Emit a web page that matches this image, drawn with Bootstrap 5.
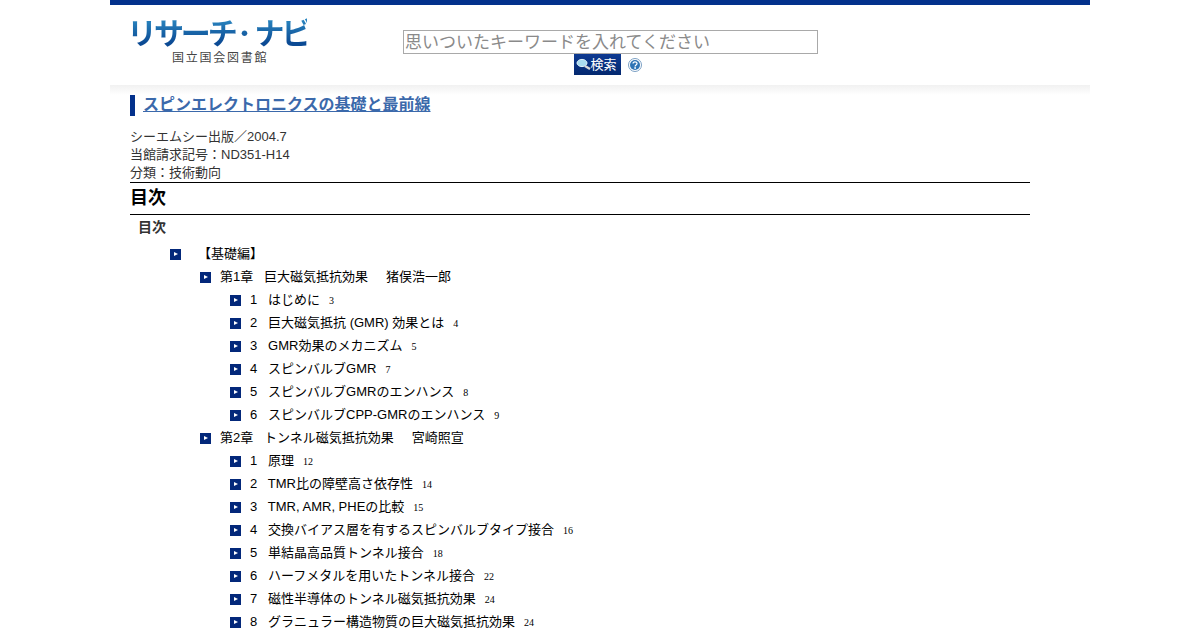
<!DOCTYPE html>
<html lang="ja"><head><meta charset="utf-8"><title>リサーチ・ナビ</title>
<link rel="stylesheet" href="https://cdn.jsdelivr.net/npm/bootstrap@5.3.0/dist/css/bootstrap.min.css">
<style>
html,body{height:630px;overflow:hidden}
body{background:#fff;color:#000;font-family:"Liberation Sans","Noto Sans CJK JP",sans-serif;font-size:13px;line-height:18px}
.shell{width:980px;margin:0 auto;border-top:5px solid #03318c}
.head{height:80px}
.logo-box{width:273px;padding:9px 0 0 17px}
.logo-main{font-size:30px;line-height:34px;font-weight:700;letter-spacing:-3.1px;white-space:nowrap;background:linear-gradient(#2a86c0 15%,#0b4a94 85%);-webkit-background-clip:text;background-clip:text;color:transparent;font-family:"Noto Sans CJK JP",sans-serif;width:180px}
.logo-dot{font-size:20px;font-weight:900;letter-spacing:0;line-height:0;vertical-align:3px}
.logo-sub{font-size:12px;line-height:14px;letter-spacing:1.75px;color:#444;margin:3px 0 0 45px;white-space:nowrap}
.search-box{width:415px;padding-top:25px;margin-left:20px}
.kw{display:block;width:415px;height:24px;border:1px solid #a9a9a9;padding:1px 1px 0;font-size:17px;line-height:22px;border-radius:0;outline:0;font-family:inherit}
.kw::placeholder{color:#8a8a8a;opacity:1}
.go-row{padding-right:6px}
.go{width:47px;height:21px;background:linear-gradient(#0e3a92,#03286f);color:#fff;font-size:13px;line-height:21px;padding-left:2px;white-space:nowrap}
.help{width:14px;height:14px;margin-left:7px;margin-top:4px}
.sub-shade{height:10px;background:linear-gradient(#f1f1f1,#fff)}
.main-area{padding:0 60px 0 20px}
.ttl{border-left:5px solid #03318c;height:21px;padding-left:8px;font-size:16px;line-height:20px;font-weight:700}
.ttl a{color:#3b69ab}
.meta{margin-top:12px;color:#333}
.sec{border-top:1px solid #000;border-bottom:1px solid #000;font-size:18px;line-height:30px;font-weight:700;height:33px}
.sec2{font-size:14px;line-height:24px;height:27px;font-weight:700;color:#333;padding-left:8px}
.tree{height:23px;line-height:23px;white-space:pre}
.lv1{padding-left:40px}.lv2{padding-left:70px}.lv3{padding-left:100px}
.mk{width:11px;height:11px;flex:none;background:#03287a;position:relative;margin-right:9px;top:1px}
.mk::after{content:"";position:absolute;left:4px;top:3px;border-left:4px solid #fff;border-top:2.5px solid transparent;border-bottom:2.5px solid transparent}
.lv1 .mk{margin-right:17px}
.pg{font-family:"Liberation Serif",serif;font-size:10px;margin-left:9px;position:relative;top:1px;color:#000}
</style></head><body>
<div class="shell">
 <div class="head d-flex">
  <div class="logo-box"><div class="logo-main">リサーチ<span class="logo-dot">・</span>ナビ</div><div class="logo-sub">国立国会図書館</div></div>
  <div class="search-box">
   <input class="kw" type="text" placeholder="思いついたキーワードを入れてください">
   <div class="go-row d-flex justify-content-center">
    <div class="go d-flex align-items-center"><svg width="15" height="14" viewBox="0 0 15 14"><ellipse cx="6" cy="5" rx="5" ry="3.6" fill="#a9dcf0" stroke="#e2f5fb" stroke-width="1"/><path d="M9 8l5 3" stroke="#d8d8d8" stroke-width="2.4"/></svg><span>検索</span></div>
    <svg class="help" viewBox="0 0 14 14"><circle cx="7" cy="7" r="6.5" fill="#fff" stroke="#7ba0c4" stroke-width="1"/><circle cx="7" cy="7" r="5" fill="#2f74b5"/><path d="M5 5.6c0-2.4 4-2.4 4-.1 0 1.5-1.9 1.4-1.9 2.9" fill="none" stroke="#fff" stroke-width="1.3"/><circle cx="7.1" cy="10" r=".9" fill="#fff"/></svg>
   </div>
  </div>
 </div>
 <div class="sub-shade"></div>
 <div class="main-area">
  <div class="ttl"><a href="#">スピンエレクトロニクスの基礎と最前線</a></div>
  <div class="meta">シーエムシー出版／2004.7<br>当館請求記号：ND351-H14<br>分類：技術動向</div>
  <div class="sec">目次</div>
  <div class="sec2">目次</div>
  <div class="tree lv1 d-flex align-items-center"><i class="mk"></i><span>【基礎編】</span></div>
  <div class="tree lv2 d-flex align-items-center"><i class="mk"></i><span>第1章   巨大磁気抵抗効果     猪俣浩一郎</span></div>
  <div class="tree lv3 d-flex align-items-center"><i class="mk"></i><span>1   はじめに</span><span class="pg">3</span></div>
  <div class="tree lv3 d-flex align-items-center"><i class="mk"></i><span>2   巨大磁気抵抗 (GMR) 効果とは</span><span class="pg">4</span></div>
  <div class="tree lv3 d-flex align-items-center"><i class="mk"></i><span>3   GMR効果のメカニズム</span><span class="pg">5</span></div>
  <div class="tree lv3 d-flex align-items-center"><i class="mk"></i><span>4   スピンバルブGMR</span><span class="pg">7</span></div>
  <div class="tree lv3 d-flex align-items-center"><i class="mk"></i><span>5   スピンバルブGMRのエンハンス</span><span class="pg">8</span></div>
  <div class="tree lv3 d-flex align-items-center"><i class="mk"></i><span>6   スピンバルブCPP-GMRのエンハンス</span><span class="pg">9</span></div>
  <div class="tree lv2 d-flex align-items-center"><i class="mk"></i><span>第2章   トンネル磁気抵抗効果     宮崎照宣</span></div>
  <div class="tree lv3 d-flex align-items-center"><i class="mk"></i><span>1   原理</span><span class="pg">12</span></div>
  <div class="tree lv3 d-flex align-items-center"><i class="mk"></i><span>2   TMR比の障壁高さ依存性</span><span class="pg">14</span></div>
  <div class="tree lv3 d-flex align-items-center"><i class="mk"></i><span>3   TMR, AMR, PHEの比較</span><span class="pg">15</span></div>
  <div class="tree lv3 d-flex align-items-center"><i class="mk"></i><span>4   交換バイアス層を有するスピンバルブタイプ接合</span><span class="pg">16</span></div>
  <div class="tree lv3 d-flex align-items-center"><i class="mk"></i><span>5   単結晶高品質トンネル接合</span><span class="pg">18</span></div>
  <div class="tree lv3 d-flex align-items-center"><i class="mk"></i><span>6   ハーフメタルを用いたトンネル接合</span><span class="pg">22</span></div>
  <div class="tree lv3 d-flex align-items-center"><i class="mk"></i><span>7   磁性半導体のトンネル磁気抵抗効果</span><span class="pg">24</span></div>
  <div class="tree lv3 d-flex align-items-center"><i class="mk"></i><span>8   グラニュラー構造物質の巨大磁気抵抗効果</span><span class="pg">24</span></div>
 </div>
</div>
</body></html>
